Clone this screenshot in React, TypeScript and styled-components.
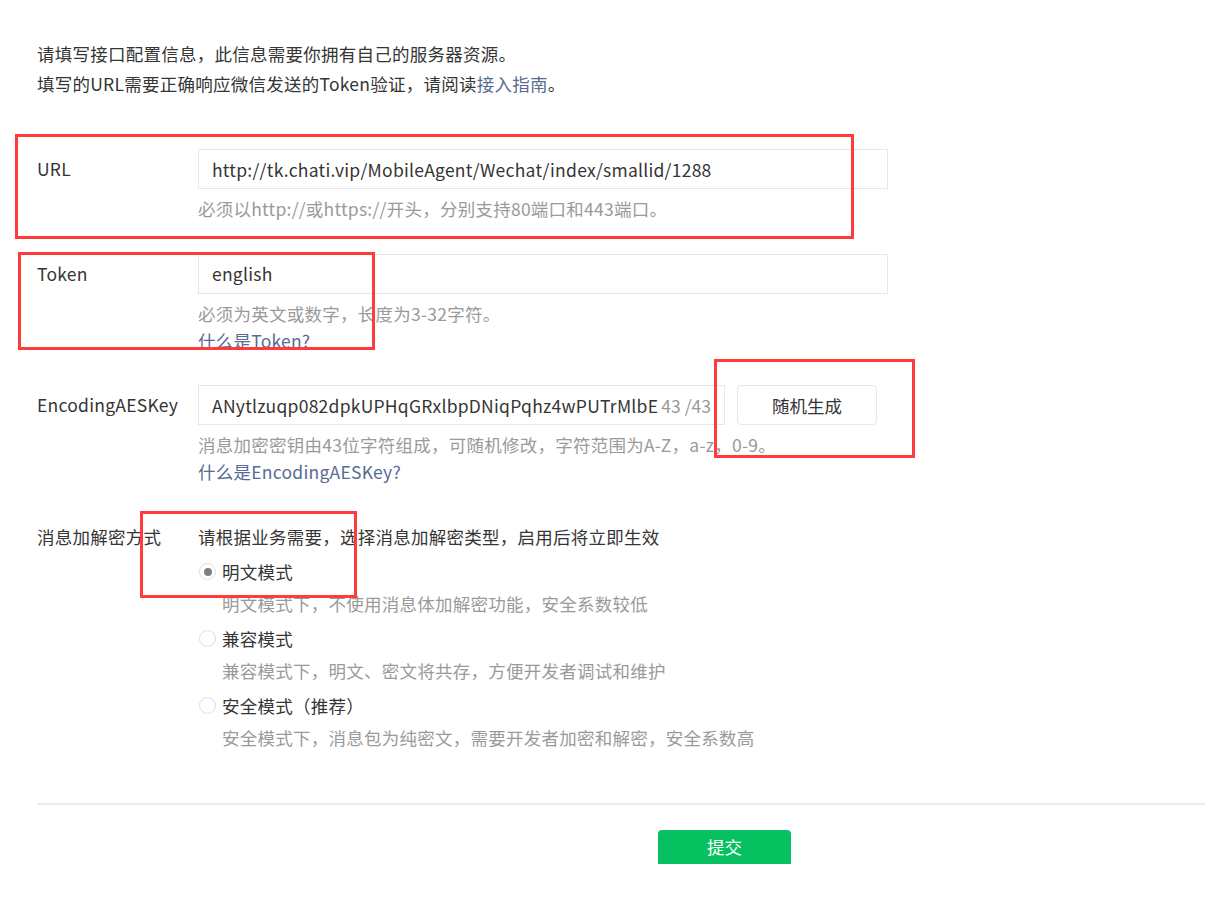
import React from "react";
import styled, { createGlobalStyle } from "styled-components";

const GlobalStyle = createGlobalStyle`
  html, body {
    margin: 0;
    padding: 0;
    background: #fff;
  }
  body {
    font-family: "Noto Sans CJK SC", "Noto Sans", sans-serif;
    color: #353535;
    font-size: 17.5px;
    letter-spacing: 0.25px;
  }
`;

const Page = styled.div`
  position: relative;
  width: 1205px;
  height: 910px;
  overflow: hidden;
  box-sizing: border-box;
  padding: 39px 0 0 37px;
`;

const Intro = styled.div`
  line-height: 30px;
  margin-bottom: 50px;

  p {
    margin: 0;
  }
`;

const Link = styled.a`
  color: #576b95;
  text-decoration: none;
  cursor: pointer;
`;

const Row = styled.div`
  display: grid;
  grid-template-columns: 161px 690px;
  margin-bottom: 31.5px;
`;

const Label = styled.div`
  line-height: 40px;
`;

const Field = styled.div`
  display: flex;
  flex-direction: column;
`;

const InputLine = styled.div`
  display: flex;
  align-items: center;
  gap: 12px;
`;

const InputBox = styled.div<{ $width?: number }>`
  box-sizing: border-box;
  width: ${(p) => (p.$width ? `${p.$width}px` : "690px")};
  height: 40px;
  border: 1px solid #e7e7eb;
  display: flex;
  align-items: center;
  padding: 0 13px;
  background: #fff;
`;

const InputText = styled.span`
  flex: 1;
  min-width: 0;
  white-space: nowrap;
  overflow: hidden;
  color: #353535;
`;

const Counter = styled.span`
  flex: none;
  color: #9a9a9a;
  margin-left: 3px;
  white-space: nowrap;
  letter-spacing: 0;
`;

const Hint = styled.div`
  color: #9a9a9a;
  line-height: 27px;
  margin-top: 6px;
`;

const HelpLink = styled(Link)`
  line-height: 27px;
`;

const GhostButton = styled.button`
  box-sizing: border-box;
  width: 140px;
  height: 40px;
  border: 1px solid #e4e8eb;
  border-radius: 4px;
  background: #fff;
  font: inherit;
  color: #353535;
  cursor: pointer;
`;

const ModeIntro = styled.div`
  line-height: 40px;
`;

const RadioItem = styled.div`
  margin-bottom: 5px;
`;

const RadioLabel = styled.label`
  display: flex;
  align-items: center;
  gap: 6px;
  line-height: 30px;
  color: #353535;
`;

const RadioCircle = styled.span<{ $checked?: boolean }>`
  box-sizing: border-box;
  width: 17px;
  height: 17px;
  border-radius: 50%;
  border: 1.5px solid #dedede;
  margin-left: 1px;
  display: flex;
  align-items: center;
  justify-content: center;

  &::after {
    content: "";
    width: 8px;
    height: 8px;
    border-radius: 50%;
    background: ${(p) => (p.$checked ? "#7f7f7f" : "transparent")};
  }
`;

const RadioDesc = styled.div`
  color: #9a9a9a;
  line-height: 30px;
  margin-top: 2px;
  padding-left: 24px;
`;

const Divider = styled.div`
  height: 2px;
  background: #ececec;
  margin-top: 45px;
`;

const Footer = styled.div`
  padding: 25px 0 0 621px;
`;

const PrimaryButton = styled.button`
  width: 133px;
  height: 34px;
  border: none;
  border-radius: 4px 4px 0 0;
  background: #07c160;
  color: #fff;
  font: inherit;
  cursor: pointer;
`;

const Marker = styled.div<{ $x: number; $y: number; $w: number; $h: number }>`
  position: absolute;
  left: ${(p) => p.$x}px;
  top: ${(p) => p.$y}px;
  width: ${(p) => p.$w}px;
  height: ${(p) => p.$h}px;
  box-sizing: border-box;
  border: 3px solid #ff3b3b;
  pointer-events: none;
`;

const modes = [
  { name: "明文模式", desc: "明文模式下，不使用消息体加解密功能，安全系数较低", checked: true },
  { name: "兼容模式", desc: "兼容模式下，明文、密文将共存，方便开发者调试和维护", checked: false },
  { name: "安全模式（推荐）", desc: "安全模式下，消息包为纯密文，需要开发者加密和解密，安全系数高", checked: false },
];

export default function App() {
  return (
    <>
      <GlobalStyle />
      <Page>
        <Intro>
          <p>请填写接口配置信息，此信息需要你拥有自己的服务器资源。</p>
          <p>
            填写的URL需要正确响应微信发送的Token验证，请阅读<Link>接入指南</Link>。
          </p>
        </Intro>

        <Row>
          <Label>URL</Label>
          <Field>
            <InputBox>
              <InputText>http://tk.chati.vip/MobileAgent/Wechat/index/smallid/1288</InputText>
            </InputBox>
            <Hint>必须以http://或https://开头，分别支持80端口和443端口。</Hint>
          </Field>
        </Row>

        <Row>
          <Label>Token</Label>
          <Field>
            <InputBox>
              <InputText>english</InputText>
            </InputBox>
            <Hint>必须为英文或数字，长度为3-32字符。</Hint>
            <HelpLink>什么是Token?</HelpLink>
          </Field>
        </Row>

        <Row>
          <Label>EncodingAESKey</Label>
          <Field>
            <InputLine>
              <InputBox $width={527}>
                <InputText>ANytlzuqp082dpkUPHqGRxlbpDNiqPqhz4wPUTrMlbEoq</InputText>
                <Counter>43 /43</Counter>
              </InputBox>
              <GhostButton>随机生成</GhostButton>
            </InputLine>
            <Hint>消息加密密钥由43位字符组成，可随机修改，字符范围为A-Z，a-z，0-9。</Hint>
            <HelpLink>什么是EncodingAESKey?</HelpLink>
          </Field>
        </Row>

        <Row>
          <Label>消息加解密方式</Label>
          <Field>
            <ModeIntro>请根据业务需要，选择消息加解密类型，启用后将立即生效</ModeIntro>
            {modes.map((m) => (
              <RadioItem key={m.name}>
                <RadioLabel>
                  <RadioCircle $checked={m.checked} />
                  {m.name}
                </RadioLabel>
                <RadioDesc>{m.desc}</RadioDesc>
              </RadioItem>
            ))}
          </Field>
        </Row>

        <Divider />
        <Footer>
          <PrimaryButton>提交</PrimaryButton>
        </Footer>

        <Marker $x={15} $y={134} $w={839} $h={105} />
        <Marker $x={18} $y={252} $w={357} $h={98} />
        <Marker $x={714} $y={359} $w={201} $h={99} />
        <Marker $x={140} $y={511} $w={217} $h={87} />
      </Page>
    </>
  );
}
